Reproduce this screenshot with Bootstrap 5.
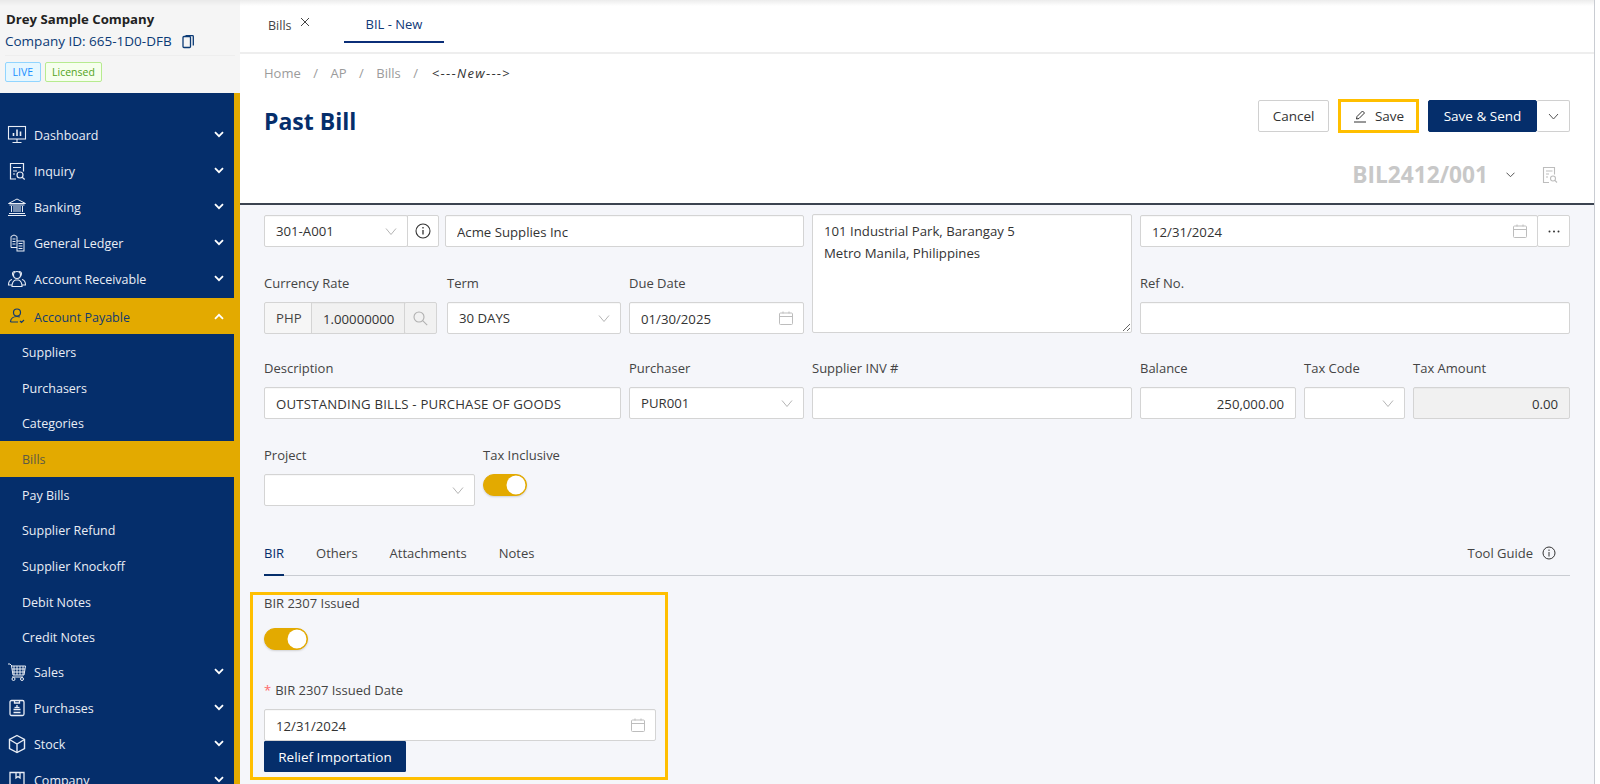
<!DOCTYPE html>
<html lang="en">
<head>
<meta charset="utf-8">
<title>Past Bill</title>
<link href="https://cdn.jsdelivr.net/npm/bootstrap@5.3.0/dist/css/bootstrap.min.css" rel="stylesheet">
<style>
html,body{height:784px;overflow:hidden;}
body{font-family:"Open Sans","Noto Sans",sans-serif;font-size:13px;color:#333;background:#fff;}
.app-shell{display:flex;height:784px;width:1600px;}
.side-col{width:240px;flex:none;display:flex;flex-direction:column;overflow:hidden;}
.side-head{height:93px;flex:none;background:linear-gradient(#e9e9e9,#f5f5f5 6px);padding:10px 5px 0 5px;}
.co-name{font-weight:700;font-size:13.2px;color:#222;line-height:18px;padding-left:1px;}
.co-id{color:#0b3a75;font-size:13.5px;line-height:20px;margin-top:3px;padding-bottom:4px;border-bottom:1px solid #eee;}
.co-id svg{margin-left:7px;vertical-align:-3px;}
.tag-row{margin-top:6px;gap:4px;}
.tag-live,.tag-lic{font-size:10.5px;font-weight:400;line-height:18px;padding:0 6.5px;border-radius:2px;border:1px solid;}
.tag-live{color:#1890ff;background:#e6f7ff;border-color:#91d5ff;}
.tag-lic{color:#52a41a;background:#f6ffed;border-color:#b7eb8f;}
.side-menu{flex:1;background:#052e6b;border-right:6px solid #e3aa00;padding-top:25px;color:#e9edf5;}
.menu-row{height:36px;display:flex;align-items:center;padding:1px 14px 0 7px;color:#e9edf5;font-size:12.5px;text-decoration:none;margin-right:-6px;}
.menu-row>svg:first-child{width:20px;height:20px;margin-right:7px;flex:none;margin-top:-4px;}
.menu-row .chev{margin-left:auto;margin-right:2px;margin-top:-4px;}
.menu-row.is-open{background:#e3aa00;color:#123a70;padding-top:4px;}
.sub-row{height:35.7px;display:flex;align-items:center;padding:3px 0 0 22px;color:#e9edf5;font-size:12.5px;text-decoration:none;}
.sub-row.is-on{background:#e3aa00;color:#5c5a45;margin-right:-6px;}
.main-col{width:1355px;flex:none;border-right:1px solid #c9ccd2;display:flex;flex-direction:column;overflow:hidden;}
.page-head{height:205px;flex:none;background:#fff;border-bottom:2px solid #3b4350;}
.top-tabs{height:54px;border-bottom:2px solid #eee;background:linear-gradient(#ececec,#fff 6px);padding-left:24px;gap:0;}
.top-tab{height:43px;display:flex;align-items:center;color:#444;font-size:13px;padding-top:9px;}
.top-tab.first{width:80px;padding-left:4px;font-size:12.5px;}
.top-tab.first svg{margin:-9px 0 0 8px;}
.top-tab.on{width:100px;justify-content:center;color:#103a78;border-bottom:2px solid #0b2e78;}
.crumbs{padding:9px 0 0 24px;line-height:20px;font-size:13px;color:#9b9b9b;margin:0;}
.crumbs .breadcrumb-item{padding-left:12.5px;}
.crumbs .breadcrumb-item:first-child{padding-left:0;}
.crumbs .breadcrumb-item+.breadcrumb-item::before{color:#9b9b9b;padding-right:12.5px;}
.crumbs .breadcrumb-item.active{color:#333;font-size:13px;line-height:20px;letter-spacing:1.3px;}
.tool-row{padding:17px 24px 0 24px;height:49px;}
.page-title{font-size:23px;font-weight:700;color:#052e6b;margin:10px 0 0 0;line-height:32px;}
.btn-plain{height:32px;font-size:13.5px;padding:0 14px;border:1px solid #d0d0d0;background:#fff;color:#333;border-radius:2px;display:flex;align-items:center;gap:8px;}
.btn-cancel{width:71px;justify-content:center;padding:0;}
.btn-gold{height:34px;border:3px solid #ffbf00;width:81px;justify-content:center;padding:0;margin:0 9px 0 9px;border-radius:0;}
.btn-navy{height:32px;font-size:13.5px;background:#052e6b;color:#fff;border:1px solid #052e6b;border-radius:2px;padding:0;width:109px;}
.btn-navy:hover{background:#052e6b;color:#fff;}
.btn-caret{width:33px;padding:0;justify-content:center;border-left:0;}
.doc-row{padding:0 36px 0 0;height:30px;margin-top:28px;gap:0;}
.doc-no{font-size:22.7px;font-weight:700;color:#c8c8c8;line-height:30px;margin-right:18px;}
.doc-chev{margin-right:27px;}
.form-pane{flex:1;background:#f5f6fa;overflow:hidden;padding:0 24px;position:relative;}
.form-area{display:grid;grid-template-columns:175px 174px 175px 320px 156px 101px 157px;column-gap:8px;grid-template-rows:32px 55px 32px 53px 32px;}
.f-label{align-self:end;line-height:20px;margin:0 0 9px 0;font-size:13px;color:#444;}
.cut-label{height:28px;margin:-18px 0 0 0;}
.form-control,.form-select{font-size:13.2px;height:32px;border-radius:2px;border:1px solid #d4d4d4;color:#333;padding:1px 11px 0;box-shadow:inset 0 1px 1px rgba(0,0,0,.03);font-family:inherit;}
.form-select{padding-top:2px;background-image:url("data:image/svg+xml,%3csvg xmlns='http://www.w3.org/2000/svg' viewBox='0 0 12 12'%3e%3cpath fill='none' stroke='%23b5b5b5' d='M1 3.5l5 6 5-6'/%3e%3c/svg%3e");background-size:12px 12px;background-position:right 10px center;}
.date-field{background-image:url("data:image/svg+xml,%3csvg xmlns='http://www.w3.org/2000/svg' viewBox='0 0 14 14'%3e%3cg fill='none' stroke='%23bdbdbd'%3e%3crect x='.5' y='2' width='13' height='11.5' rx='1'/%3e%3cpath d='M.5 5.5h13M4 .5v2M10 .5v2'/%3e%3c/g%3e%3c/svg%3e");background-repeat:no-repeat;background-size:14px 14px;background-position:right 10px center;}
.addon-btn{background:#fff;border:1px solid #d4d4d4;border-radius:0 2px 2px 0;width:32px;flex:none;padding:0;display:flex;align-items:center;justify-content:center;margin-left:-1px;}
.addon-gray{background:#f1f1f1;border-radius:2px;width:33px;}
.input-group-text{font-size:13.2px;background:#f6f6f6;color:#444;border:1px solid #d4d4d4;border-radius:2px 0 0 2px;padding:1px 11px 0;height:32px;width:48px;flex:none;}
.form-control[readonly]{background:#f1f1f1;}
.rate-box{background:#f1f1f1!important;width:94px;flex:none!important;padding:1px 0 0 11px;border-radius:0;margin-left:-1px;}
.memo-box{grid-column:4;grid-row:1/4;height:119px;margin-top:-1px;padding:5px 11px;line-height:22px;resize:both;}
.name-field{margin-left:-2px;width:calc(100% + 2px);}
.wide-text{letter-spacing:.2px;}
.c1{grid-column:1;}.c2{grid-column:2;}.c3{grid-column:3;}.c4{grid-column:4;}.c5{grid-column:5;}.c6{grid-column:6;}.c7{grid-column:7;}
.r1{grid-row:1;}.r2{grid-row:2;}.r3{grid-row:3;}.r4{grid-row:4;}.r5{grid-row:5;}
.span-12{grid-column:1/3;}.span-23{grid-column:2/4;}.span-57{grid-column:5/8;}
.proj-row{margin-top:26px;gap:8px;}
.proj-col{width:211px;}
.switch-wrap{padding:0;margin:0;min-height:0;height:22px;}
.switch-wrap .form-check-input{width:44px;height:22px;margin:0;background-color:#e3aa00;border-color:#e3aa00;float:none;display:block;background-image:url("data:image/svg+xml,%3csvg xmlns='http://www.w3.org/2000/svg' viewBox='-4 -4 8 8'%3e%3ccircle r='3.8' fill='%23fff'/%3e%3c/svg%3e");background-position:right center;box-shadow:0 1px 2px rgba(0,0,0,.15);}
.tab-bar{margin-top:34px;height:36px;border-bottom:1px solid #c9ccd2;align-items:flex-start;gap:32px;}
.tab-bar .nav-link{padding:0;color:#444;font-size:13px;line-height:20px;height:36px;padding-top:3px;border-bottom:2px solid transparent;background:none;}
.tab-bar .nav-link.active{color:#052e6b;border-bottom-color:#052e6b;}
.guide{margin-left:auto;padding:0 14px 0 0;line-height:20px;font-size:13px;color:#444;display:flex;align-items:center;gap:9px;height:26px;}
.focus-box{margin:16px 0 0 -14px;width:418px;height:188px;border:3px solid #ffbf00;padding:0 9px 0 11px;}
.box-label{line-height:17px;font-size:13px;color:#444;margin:0;}
.box-gap{margin-top:30px;}
.req{color:#ff6b6b;margin-right:4px;}
.btn-relief{width:142px;height:31px;padding:1px 0 0;display:block;border-radius:1px;}
</style>
</head>
<body>
<div class="app-shell">
  <aside class="side-col">
    <div class="side-head">
      <div class="co-name">Drey Sample Company</div>
      <div class="co-id">Company ID: 665-1D0-DFB <svg width="12" height="14" viewBox="0 0 12 14" fill="none" stroke="#0b3a75" stroke-width="1.3"><rect x="1" y="1.5" width="7.5" height="11" rx="1"/><path d="M3.5 .7H10.5a.8.8 0 0 1 .8.8V10.5"/></svg></div>
      <div class="d-flex tag-row">
        <span class="badge tag-live">LIVE</span>
        <span class="badge tag-lic">Licensed</span>
      </div>
    </div>
    <nav class="side-menu">
      <a class="menu-row" href="#"><svg viewBox="0 0 20 20" fill="none" stroke="currentColor" stroke-width="1.1"><rect x="1.5" y="1.5" width="17" height="12.5"/><path d="M10 14v3M5.5 17.5h9" /><path d="M6.5 11V8M10 11V4.5M13.5 11V6.5" stroke-width="1.6"/></svg>Dashboard<svg class="chev" width="10" height="7" viewBox="0 0 10 7" fill="none" stroke="#fff" stroke-width="1.8"><path d="M1 1.2l4 4 4-4"/></svg></a>
      <a class="menu-row" href="#"><svg viewBox="0 0 20 20" fill="none" stroke="currentColor" stroke-width="1.2"><path d="M9 18H3.500V2.500h13v8"/><path d="M6 6.500h8M6 10h4M6 13h2"/><circle cx="13" cy="14" r="3"/><path d="M15.200 16.200l2.500 2.300"/></svg>Inquiry<svg class="chev" width="10" height="7" viewBox="0 0 10 7" fill="none" stroke="#fff" stroke-width="1.8"><path d="M1 1.2l4 4 4-4"/></svg></a>
      <a class="menu-row" href="#"><svg viewBox="0 0 20 20" fill="none" stroke="currentColor" stroke-width="1"><path d="M1.500 6.500L10 2l8.500 4.500zM2.500 8h15M2 16.500h16M1 18.500h18"/><path d="M4.500 9v6M7 9v6M9 9v6M11 9v6M13 9v6M15.500 9v6"/></svg>Banking<svg class="chev" width="10" height="7" viewBox="0 0 10 7" fill="none" stroke="#fff" stroke-width="1.8"><path d="M1 1.2l4 4 4-4"/></svg></a>
      <a class="menu-row" href="#"><svg viewBox="0 0 20 20" fill="none" stroke="currentColor" stroke-width="1"><path d="M10 14.500H4V3.500L7 2l3 1.500V8"/><path d="M5.500 6h3M5.500 8.500h3M5.500 11h3"/><rect x="10" y="8" width="7" height="10"/><path d="M11.500 10.500h4M11.500 13h4M11.500 15.500h4"/></svg>General Ledger<svg class="chev" width="10" height="7" viewBox="0 0 10 7" fill="none" stroke="#fff" stroke-width="1.8"><path d="M1 1.2l4 4 4-4"/></svg></a>
      <a class="menu-row" href="#"><svg viewBox="0 0 20 20" fill="none" stroke="currentColor" stroke-width="1.1"><circle cx="10" cy="6" r="3.500"/><path d="M5 17.500c0-5 2-6 3.500-6.500h3c1.500.5 3.500 1.500 3.500 6.500zM6.500 7.500C4 3 7 2.500 8 2.500M13.500 7.500c2.500-4.500-.5-5-1.500-5M5 16H1.500c0-4 1-5 3.500-5.500M15 16h3.500c0-4-1-5-3.500-5.500"/></svg>Account Receivable<svg class="chev" width="10" height="7" viewBox="0 0 10 7" fill="none" stroke="#fff" stroke-width="1.8"><path d="M1 1.2l4 4 4-4"/></svg></a>
      <a class="menu-row is-open" href="#"><svg viewBox="0 0 20 20" fill="none" stroke="currentColor" stroke-width="1.2"><circle cx="10" cy="6.500" r="3.500"/><path d="M3.500 16c0-3.500 3-5.500 6.500-5.500 1 0 2 .2 2.800.5M3.500 16H11M13 15l1.500 1.500L17 14"/></svg>Account Payable<svg class="chev" width="10" height="7" viewBox="0 0 10 7" fill="none" stroke="#fff" stroke-width="1.8"><path d="M1 5.800l4-4 4 4"/></svg></a>
      <a class="sub-row" href="#">Suppliers</a>
      <a class="sub-row" href="#">Purchasers</a>
      <a class="sub-row" href="#">Categories</a>
      <a class="sub-row is-on" href="#">Bills</a>
      <a class="sub-row" href="#">Pay Bills</a>
      <a class="sub-row" href="#">Supplier Refund</a>
      <a class="sub-row" href="#">Supplier Knockoff</a>
      <a class="sub-row" href="#">Debit Notes</a>
      <a class="sub-row" href="#">Credit Notes</a>
      <a class="menu-row" href="#"><svg viewBox="0 0 20 20" fill="none" stroke="currentColor" stroke-width="1"><path d="M1 2h2l2 2h13.500l-1.500 9H6L4.500 4M7 4v9M10 4v9M13 4v9M16 4v9M5 7h13M5.500 10h12M5 15h11"/><circle cx="6.500" cy="17" r="1.500"/><circle cx="15" cy="17" r="1.500"/></svg>Sales<svg class="chev" width="10" height="7" viewBox="0 0 10 7" fill="none" stroke="#fff" stroke-width="1.8"><path d="M1 1.2l4 4 4-4"/></svg></a>
      <a class="menu-row" href="#"><svg viewBox="0 0 20 20" fill="none" stroke="currentColor" stroke-width="1.300"><rect x="3" y="2.500" width="14" height="15" rx="1.500"/><path d="M7.500 2.500v2.500h5V2.500M6.500 14.500h7M6.500 11.500h7M10 7v2.500" /><path d="M7.500 9.500h5"/></svg>Purchases<svg class="chev" width="10" height="7" viewBox="0 0 10 7" fill="none" stroke="#fff" stroke-width="1.8"><path d="M1 1.2l4 4 4-4"/></svg></a>
      <a class="menu-row" href="#"><svg viewBox="0 0 20 20" fill="none" stroke="currentColor" stroke-width="1.400"><path d="M10 1.500l7.500 4v9L10 18.500l-7.500-4v-9z"/><path d="M2.500 5.500L10 10l7.500-4.500M10 10v8.500"/></svg>Stock<svg class="chev" width="10" height="7" viewBox="0 0 10 7" fill="none" stroke="#fff" stroke-width="1.8"><path d="M1 1.2l4 4 4-4"/></svg></a>
      <a class="menu-row" href="#"><svg viewBox="0 0 20 20" fill="none" stroke="currentColor" stroke-width="1.300"><path d="M3 18V2.500h14V18M3 18h14M9 2.500V8l2-1.500L13 8V2.500"/></svg>Company<svg class="chev" width="10" height="7" viewBox="0 0 10 7" fill="none" stroke="#fff" stroke-width="1.8"><path d="M1 1.2l4 4 4-4"/></svg></a>
    </nav>
  </aside>

  <main class="main-col">
    <header class="page-head">
      <div class="d-flex top-tabs">
        <div class="top-tab first">Bills<svg width="10" height="10" viewBox="0 0 10 10" stroke="#444" stroke-width="1"><path d="M1 1l8 8M9 1l-8 8"/></svg></div>
        <div class="top-tab on">BIL - New</div>
      </div>
      <ol class="breadcrumb crumbs">
        <li class="breadcrumb-item">Home</li>
        <li class="breadcrumb-item">AP</li>
        <li class="breadcrumb-item">Bills</li>
        <li class="breadcrumb-item active">&lt;---<em>New</em>---&gt;</li>
      </ol>
      <div class="d-flex align-items-center justify-content-between tool-row">
        <h1 class="page-title">Past Bill</h1>
        <div class="d-flex align-items-center">
          <button class="btn btn-plain btn-cancel" type="button">Cancel</button>
          <button class="btn btn-plain btn-gold" type="button"><svg width="14" height="14" viewBox="0 0 14 14" fill="none" stroke="#333" stroke-width="1"><path d="M3.500 10l.5-2.500L9.500 2l2 2-5.500 5.500zM1 13h12"/></svg>Save</button>
          <button class="btn btn-navy" type="button">Save &amp; Send</button>
          <button class="btn btn-plain btn-caret" type="button"><svg width="11" height="7" viewBox="0 0 11 7" fill="none" stroke="#555"><path d="M1 1l4.500 5L10 1"/></svg></button>
        </div>
      </div>
      <div class="d-flex align-items-center justify-content-end doc-row">
        <span class="doc-no">BIL2412/001</span>
        <svg class="doc-chev" width="9" height="6" viewBox="0 0 9 6" fill="none" stroke="#555"><path d="M.5.700l4 4 4-4"/></svg>
        <svg width="16" height="18" viewBox="0 0 16 18" fill="none" stroke="#bdbdbd" stroke-width="1.100"><path d="M7 16.500H1.500V1.500h11v7"/><path d="M4 5h6.500M4 8h3M4 11h2"/><circle cx="11" cy="12.500" r="2.500"/><path d="M13 14.500l2 2"/></svg>
      </div>
    </header>

    <section class="form-pane">
      <div class="f-label cut-label">Supplier</div>
      <form>
        <div class="form-area">
          <div class="c1 r1 d-flex">
            <select class="form-select flex-grow-1"><option>301-A001</option></select>
            <button class="addon-btn" type="button"><svg width="16" height="16" viewBox="0 0 16 16" fill="none" stroke="#333" stroke-width="1.1"><circle cx="8" cy="8" r="7"/><path d="M8 7v4.500M8 4v1.500" stroke-width="1.300"/></svg></button>
          </div>
          <input class="form-control c2 r1 span-23 name-field" value="Acme Supplies Inc">
          <textarea class="form-control memo-box">101 Industrial Park, Barangay 5
Metro Manila, Philippines</textarea>
          <div class="span-57 r1 d-flex">
            <input class="form-control date-field flex-grow-1" value="12/31/2024">
            <button class="addon-btn addon-gray bg-white" type="button"><svg width="12" height="3" viewBox="0 0 12 3" fill="#333"><circle cx="1.500" cy="1.500" r="1"/><circle cx="6" cy="1.500" r="1"/><circle cx="10.500" cy="1.500" r="1"/></svg></button>
          </div>

          <label class="f-label c1 r2">Currency Rate</label>
          <label class="f-label c2 r2">Term</label>
          <label class="f-label c3 r2">Due Date</label>
          <label class="f-label c5 r2">Ref No.</label>

          <div class="c1 r3 d-flex">
            <span class="input-group-text">PHP</span>
            <input class="form-control rate-box" value="1.00000000" readonly>
            <button class="addon-btn addon-gray" type="button"><svg width="15" height="15" viewBox="0 0 15 15" fill="none" stroke="#b0b0b0" stroke-width="1.100"><circle cx="6" cy="6" r="5"/><path d="M9.700 9.700l4.500 4.500"/></svg></button>
          </div>
          <select class="form-select c2 r3"><option>30 DAYS</option></select>
          <input class="form-control date-field c3 r3" value="01/30/2025">
          <input class="form-control r3 span-57">

          <label class="f-label c1 r4">Description</label>
          <label class="f-label c3 r4">Purchaser</label>
          <label class="f-label c4 r4">Supplier INV #</label>
          <label class="f-label c5 r4">Balance</label>
          <label class="f-label c6 r4">Tax Code</label>
          <label class="f-label c7 r4">Tax Amount</label>

          <input class="form-control span-12 r5 wide-text" value="OUTSTANDING BILLS - PURCHASE OF GOODS">
          <select class="form-select c3 r5"><option>PUR001</option></select>
          <input class="form-control c4 r5">
          <input class="form-control c5 r5 text-end" value="250,000.00">
          <select class="form-select c6 r5"><option></option></select>
          <input class="form-control c7 r5 text-end" value="0.00" readonly>
        </div>

        <div class="d-flex proj-row">
          <div class="proj-col">
            <label class="f-label d-block">Project</label>
            <select class="form-select"><option></option></select>
          </div>
          <div>
            <label class="f-label d-block">Tax Inclusive</label>
            <div class="form-check form-switch switch-wrap mt-1"><input class="form-check-input" type="checkbox" role="switch" checked></div>
          </div>
        </div>

        <div class="d-flex tab-bar">
          <ul class="nav tab-bar border-0 m-0">
            <li class="nav-item"><a class="nav-link active" href="#">BIR</a></li>
            <li class="nav-item"><a class="nav-link" href="#">Others</a></li>
            <li class="nav-item"><a class="nav-link" href="#">Attachments</a></li>
            <li class="nav-item"><a class="nav-link" href="#">Notes</a></li>
          </ul>
          <div class="guide">Tool Guide <svg width="14" height="14" viewBox="0 0 14 14" fill="none" stroke="#333"><circle cx="7" cy="7" r="6"/><path d="M7 6v4.500M7 3.500V5"/></svg></div>
        </div>

        <div class="focus-box">
          <p class="box-label">BIR 2307 Issued</p>
          <div class="form-check form-switch switch-wrap mt-3"><input class="form-check-input" type="checkbox" role="switch" checked></div>
          <label class="f-label d-block box-gap"><span class="req">*</span>BIR 2307 Issued Date</label>
          <input class="form-control date-field" value="12/31/2024">
          <button class="btn btn-navy btn-relief" type="button">Relief Importation</button>
        </div>
      </form>
    </section>
  </main>
</div>
<script src="https://cdn.jsdelivr.net/npm/bootstrap@5.3.0/dist/js/bootstrap.bundle.min.js"></script>
</body>
</html>
